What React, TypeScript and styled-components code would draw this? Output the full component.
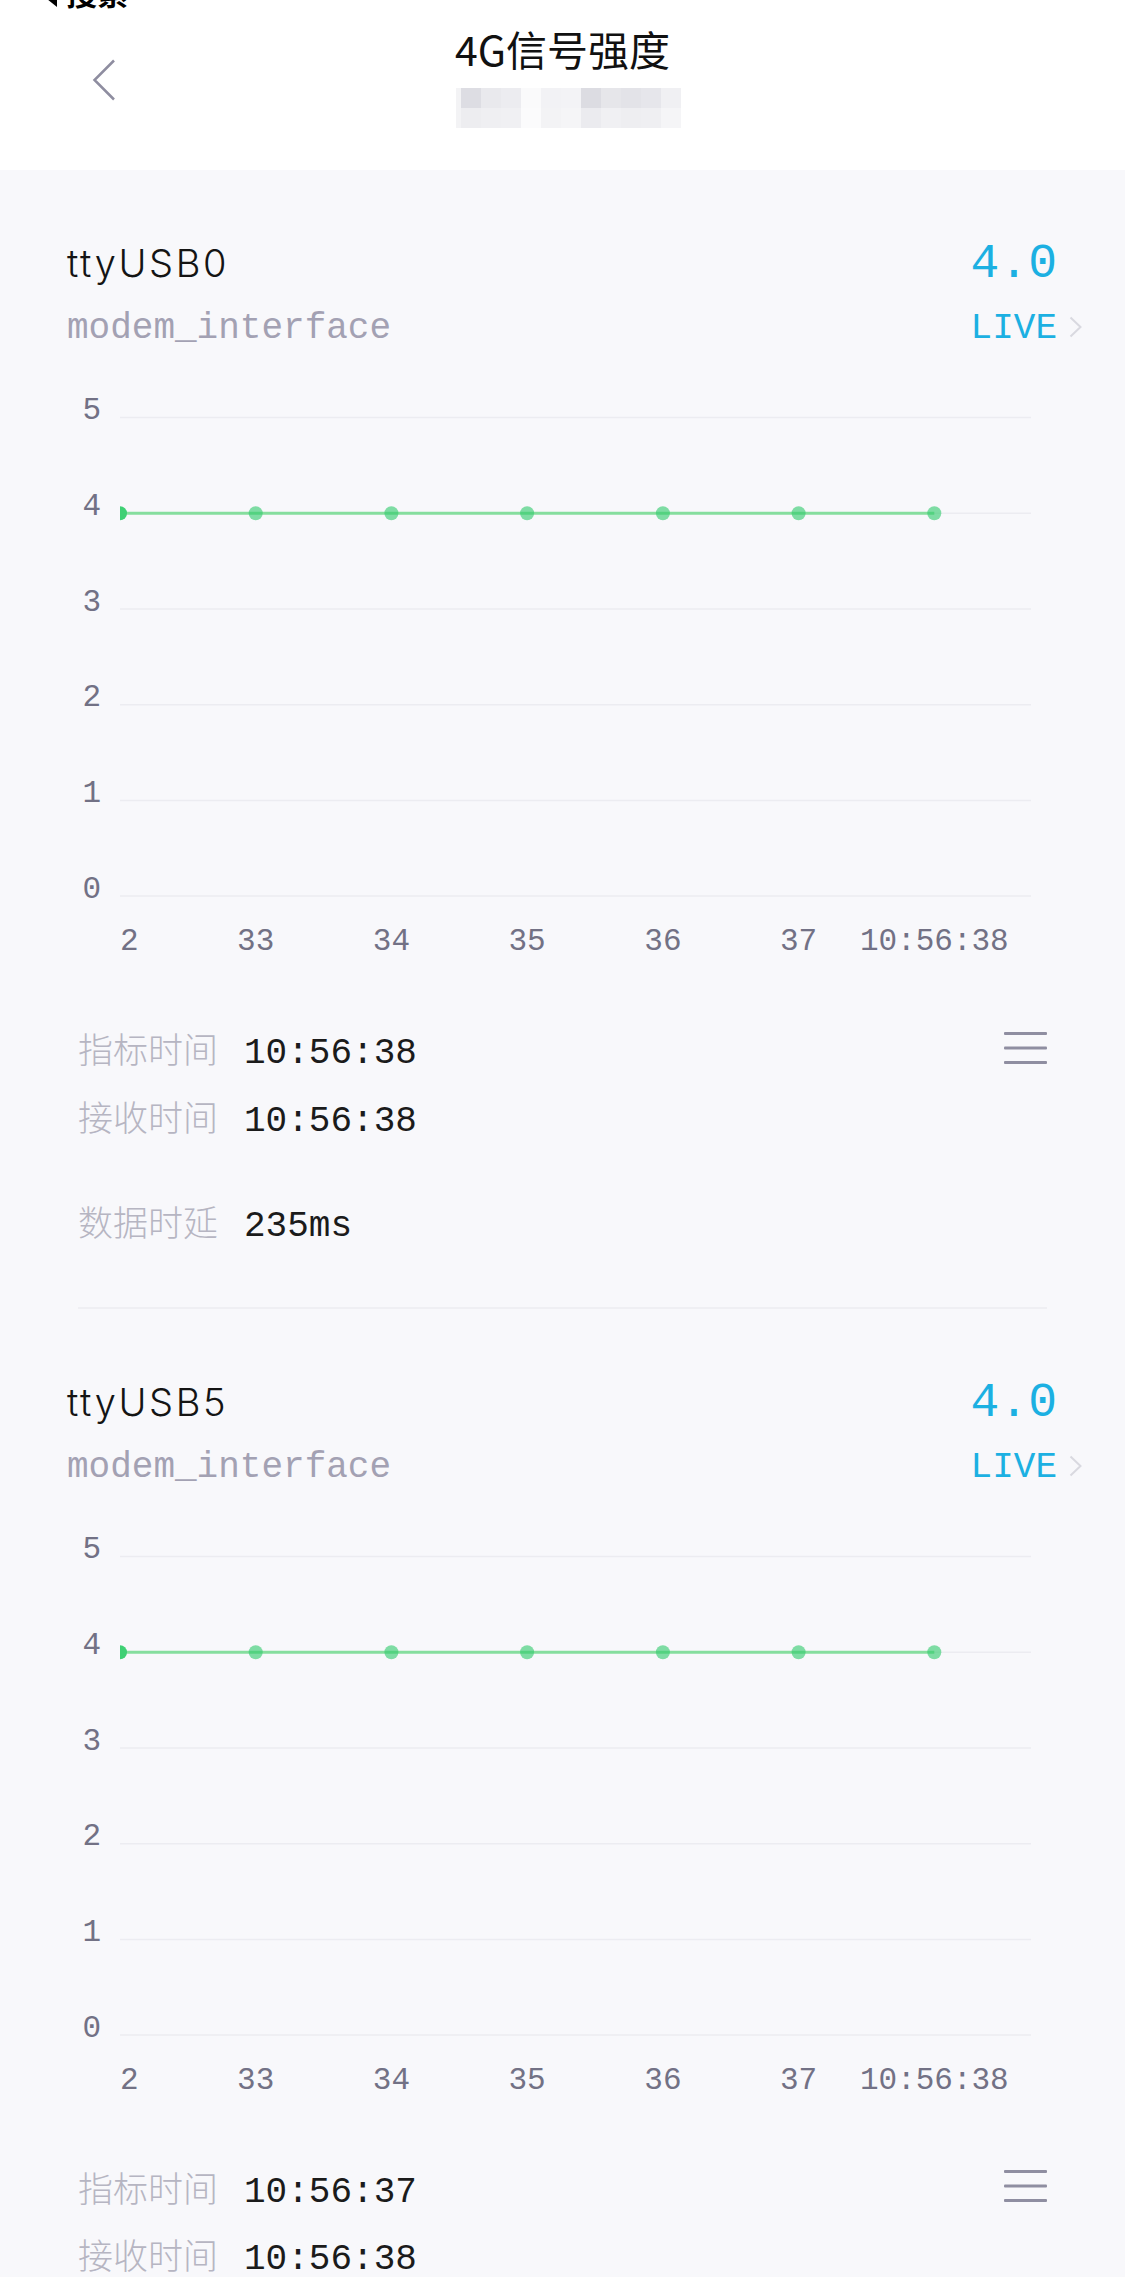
import React from 'react';
import styled, { createGlobalStyle } from 'styled-components';

const GlobalStyle = createGlobalStyle`
  html, body { margin: 0; padding: 0; background: #f8f8fb; }
  body { font-family: "Noto Sans", "Noto Sans CJK SC", sans-serif; -webkit-font-smoothing: antialiased; }
  #root { width: 1125px; }
`;

const MONO = `"Liberation Mono", "DejaVu Sans Mono", monospace`;
const CJK = `"Noto Sans CJK SC", "Noto Sans", sans-serif`;

const Page = styled.div`
  width: 1125px;
  min-height: 2277px;
  background: #f8f8fb;
  overflow: hidden;
`;

const Header = styled.header`
  height: 170px;
  background: #ffffff;
  overflow: hidden;
  display: flex;
  flex-direction: column;
`;

const StatusBack = styled.div`
  margin-top: -24px;
  height: 31px;
  padding-left: 46px;
  display: flex;
  align-items: flex-end;
  gap: 8px;
  font: 700 31px/31px ${CJK};
  color: #000;
`;

const NavRow = styled.div`
  display: grid;
  grid-template-columns: 1fr auto 1fr;
  padding-top: 17px;
`;

const BackButton = styled.button`
  justify-self: start;
  margin: 35px 0 0 92px;
  padding: 0;
  border: 0;
  background: none;
  width: 24px;
  height: 42px;
  display: flex;
`;

const TitleBlock = styled.div`
  display: flex;
  flex-direction: column;
  align-items: center;
`;

const Title = styled.h1`
  margin: 0;
  font: 400 41px/49px ${CJK};
  color: #111;
`;

const Mosaic = styled.svg`
  display: block;
  margin-top: 15px;
  margin-left: 12px;
`;

const Section = styled.section`
  display: flex;
  flex-direction: column;
  padding-top: 68px;
`;

const HeadRow = styled.div<{ $gap?: number }>`
  display: flex;
  justify-content: space-between;
  align-items: baseline;
  padding: 0 43px 0 67px;
  margin-top: ${(p) => p.$gap ?? 0}px;
`;

const DeviceName = styled.div`
  font: 300 38px/44px Inter, "Noto Sans", sans-serif;
  letter-spacing: 2.6px;
  color: #141414;
`;

const Reading = styled.div`
  font: 400 48px/52px ${MONO};
  color: #1cb0e2;
  margin-right: 25px;
`;

const Kind = styled.div`
  font: 400 36px/40px ${MONO};
  color: #a3a1b3;
`;

const LiveLink = styled.a`
  display: flex;
  align-items: baseline;
  gap: 12px;
  font: 400 36px/40px ${MONO};
  color: #1cb0e2;
  text-decoration: none;
`;

const ChartSvg = styled.svg`
  display: block;
  margin-top: 40px;
`;

const InfoBlock = styled.div`
  display: flex;
  flex-direction: column;
  padding: 0 78px;
  margin-top: 55px;
`;

const InfoRow = styled.div<{ $gap: number }>`
  display: flex;
  align-items: baseline;
  height: 48px;
  margin-top: ${(p) => p.$gap}px;
`;

const InfoLabel = styled.span`
  font: 300 35px/48px ${CJK};
  color: #b6b5c2;
  margin-right: 26px;
`;

const InfoValue = styled.span`
  font: 400 36px/48px ${MONO};
  color: #1b1b1b;
`;

const MenuIcon = styled.svg`
  margin-left: auto;
  align-self: center;
  flex: none;
`;

const Divider = styled.hr`
  margin: 62px 78px 0;
  border: 0;
  height: 2px;
  background: #efeff3;
`;

const ROW1 = ['#dddde3', '#e9e9ed', '#ececf0', '#fafafb', '#f2f2f5', '#f3f3f6', '#dcdce2', '#e6e6ea', '#e3e3e8', '#e6e6eb', '#f0f0f3'];
const ROW2 = ['#ededf0', '#efeff2', '#f0f0f3', '#fbfbfc', '#f3f3f5', '#f5f5f7', '#ebebef', '#f0f0f3', '#eeeef1', '#efeff2', '#f5f5f7'];

const Blurred = () => (
  <Mosaic width="225" height="40" viewBox="0 0 225 40">
    <rect x="0" y="0" width="5" height="40" fill="#f3f3f5" />
    {ROW1.map((c, i) => (
      <rect key={`a${i}`} x={5 + i * 20} y="0" width="20" height="20" fill={c} />
    ))}
    {ROW2.map((c, i) => (
      <rect key={`b${i}`} x={5 + i * 20} y="20" width="20" height="20" fill={c} />
    ))}
  </Mosaic>
);

const Y_TOP = 28.6;
const STEP = 95.7;
const PLOT_L = 120;
const PLOT_R = 1031;
const XS = [120, 255.7, 391.4, 527.1, 662.9, 798.6, 934.3];
const XL = ['32', '33', '34', '35', '36', '37', '10:56:38'];

const Chart = ({ id, value }: { id: string; value: number }) => {
  const gy = (v: number) => Y_TOP + (5 - v) * STEP;
  const dy = gy(value);
  return (
    <ChartSvg width="1125" height="580" viewBox="0 0 1125 580">
      <defs>
        <clipPath id={`plot-${id}`}>
          <rect x={PLOT_L} y="0" width={1125 - PLOT_L} height="580" />
        </clipPath>
      </defs>
      {[5, 4, 3, 2, 1, 0].map((v) => (
        <g key={v}>
          <line x1={PLOT_L} x2={PLOT_R} y1={gy(v)} y2={gy(v)} stroke="#ececf1" strokeWidth="1.5" />
          <text
            x="101"
            y={gy(v) - 7}
            textAnchor="end"
            dominantBaseline="central"
            fontFamily={MONO}
            fontSize="31"
            fill="#727185"
          >
            {v}
          </text>
        </g>
      ))}
      <g clipPath={`url(#plot-${id})`}>
        <line x1={XS[0]} x2={XS[XS.length - 1]} y1={dy} y2={dy} stroke="#86de9e" strokeWidth="3" />
        {XS.map((x, i) => (
          <circle key={x} cx={x} cy={dy} r="7" fill={i === 0 ? '#3fd074' : 'rgba(52, 204, 110, 0.62)'} />
        ))}
        {XS.map((x, i) => (
          <text
            key={`l${x}`}
            x={x}
            y="552"
            textAnchor="middle"
            dominantBaseline="central"
            fontFamily={MONO}
            fontSize="31"
            fill="#727185"
          >
            {XL[i]}
          </text>
        ))}
      </g>
    </ChartSvg>
  );
};

const Menu = () => (
  <MenuIcon width="43" height="33" viewBox="0 0 43 33">
    <rect x="0" y="0" width="43" height="3" rx="1" fill="#8f8ea1" />
    <rect x="0" y="14.5" width="43" height="3" rx="1" fill="#8f8ea1" />
    <rect x="0" y="29" width="43" height="3" rx="1" fill="#8f8ea1" />
  </MenuIcon>
);

type Device = { id: string; name: string; value: number; metric: string; recv: string; delay: string };

const DEVICES: Device[] = [
  { id: 'usb0', name: 'ttyUSB0', value: 4, metric: '10:56:38', recv: '10:56:38', delay: '235ms' },
  { id: 'usb5', name: 'ttyUSB5', value: 4, metric: '10:56:37', recv: '10:56:38', delay: '235ms' },
];

const DeviceSection = ({ d }: { d: Device }) => (
  <Section>
    <HeadRow>
      <DeviceName>{d.name}</DeviceName>
      <Reading>{d.value.toFixed(1)}</Reading>
    </HeadRow>
    <HeadRow $gap={19}>
      <Kind>modem_interface</Kind>
      <LiveLink>
        LIVE
        <svg width="13" height="22" viewBox="0 0 13 22">
          <polyline points="1.5,1.5 11.5,11 1.5,20.5" fill="none" stroke="#d9d9e0" strokeWidth="2" />
        </svg>
      </LiveLink>
    </HeadRow>
    <Chart id={d.id} value={d.value} />
    <InfoBlock>
      <InfoRow $gap={0}>
        <InfoLabel>指标时间</InfoLabel>
        <InfoValue>{d.metric}</InfoValue>
        <Menu />
      </InfoRow>
      <InfoRow $gap={19.5}>
        <InfoLabel>接收时间</InfoLabel>
        <InfoValue>{d.recv}</InfoValue>
      </InfoRow>
      <InfoRow $gap={57}>
        <InfoLabel>数据时延</InfoLabel>
        <InfoValue>{d.delay}</InfoValue>
      </InfoRow>
    </InfoBlock>
    <Divider />
  </Section>
);

export default function App() {
  return (
    <Page>
      <GlobalStyle />
      <Header>
        <StatusBack>
          <svg width="12" height="16" viewBox="0 0 12 16">
            <polygon points="11,0 1,8 11,16" fill="#000" />
          </svg>
          搜索
        </StatusBack>
        <NavRow>
          <BackButton aria-label="返回">
            <svg width="24" height="42" viewBox="0 0 24 42">
              <polyline points="22,1.5 2.5,21 22,40.5" fill="none" stroke="#8e8da0" strokeWidth="2.5" />
            </svg>
          </BackButton>
          <TitleBlock>
            <Title>4G信号强度</Title>
            <Blurred />
          </TitleBlock>
          <div />
        </NavRow>
      </Header>
      {DEVICES.map((d) => (
        <DeviceSection key={d.id} d={d} />
      ))}
    </Page>
  );
}
